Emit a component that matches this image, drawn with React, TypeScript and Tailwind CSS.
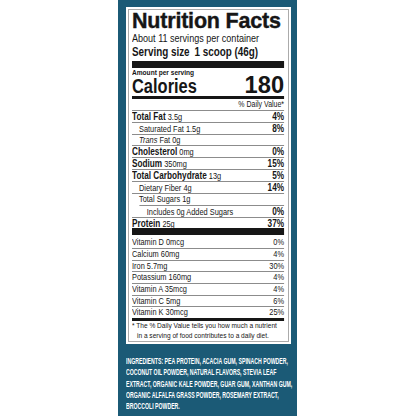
import React from "react";

type Nutrient = {
  label: string;
  amount?: string;
  pct?: string;
  bold?: boolean;
  indent?: number;
  italic?: string;
  lineIndent?: number;
  short?: boolean;
};

const nutrients: Nutrient[] = [
  { label: "Total Fat", amount: "3.5g", pct: "4%", bold: true },
  { label: "Saturated Fat", amount: "1.5g", pct: "8%", indent: 1 },
  { italic: "Trans", label: "Fat", amount: "0g", indent: 1, short: true },
  { label: "Cholesterol", amount: "0mg", pct: "0%", bold: true },
  { label: "Sodium", amount: "350mg", pct: "15%", bold: true },
  { label: "Total Carbohydrate", amount: "13g", pct: "5%", bold: true },
  { label: "Dietary Fiber", amount: "4g", pct: "14%", indent: 1 },
  { label: "Total Sugars", amount: "1g", indent: 1, lineIndent: 1 },
  { label: "Includes 0g Added Sugars", pct: "0%", indent: 2 },
  { label: "Protein", amount: "25g", pct: "37%", bold: true, short: true },
];

const vitamins: [string, string, boolean][] = [
  ["Vitamin D 0mcg", "0%", false],
  ["Calcium 60mg", "4%", false],
  ["Iron 5.7mg", "30%", true],
  ["Potassium 160mg", "4%", false],
  ["Vitamin A 35mcg", "4%", false],
  ["Vitamin C 5mg", "6%", true],
  ["Vitamin K 30mcg", "25%", false],
];

const ingredients = [
  "INGREDIENTS: PEA PROTEIN, ACACIA GUM, SPINACH POWDER,",
  "COCONUT OIL POWDER, NATURAL FLAVORS, STEVIA LEAF",
  "EXTRACT, ORGANIC KALE POWDER, GUAR GUM, XANTHAN GUM,",
  "ORGANIC ALFALFA GRASS POWDER, ROSEMARY EXTRACT,",
  "BROCCOLI POWDER.",
];

// the label is set in a narrow face; no narrow font is installed, so the
// block is laid out wide and squeezed horizontally
const indentCls = ["pl-0", "pl-[8.5px]", "pl-[18px]"];
const lineCls = ["ml-0", "ml-[8.5px]"];

function Line({ indent = 0 }: { indent?: number }) {
  return <div className={`h-px bg-[#8c8c8c] ${lineCls[indent]}`} />;
}

function NutrientRow({ n, last }: { n: Nutrient; last: boolean }) {
  return (
    <>
      <div
        className={`flex items-baseline justify-between ${n.short ? "h-[10px]" : "h-[11px]"} leading-[11px] ${indentCls[n.indent ?? 0]}`}
      >
        <span className="text-[9px]">
          {n.italic && <i>{n.italic} </i>}
          {n.bold ? <span className="text-[10px] font-bold">{n.label}</span> : n.label}
          {n.amount && <span> {n.amount}</span>}
        </span>
        {n.pct && <span className="text-[10px] font-bold">{n.pct}</span>}
      </div>
      {!last && <Line indent={n.lineIndent} />}
    </>
  );
}

export default function App() {
  return (
    <div className="flex min-h-[416px] bg-white pl-[118px] font-['Liberation_Sans',Arial,sans-serif]">
      <div className="min-h-[416px] w-[179px] shrink-0 overflow-hidden bg-[#1b5a76] pt-[7px] pl-[8px] pr-[6px]">
        <div className="bg-white p-[2px] text-[#161616]">
          <div className="overflow-hidden border border-[#ababab] pl-[3px] pr-[4px]">
            <div className="whitespace-nowrap text-[21.5px] leading-[22px] font-bold tracking-[-0.2px] [-webkit-text-stroke:0.4px_#161616]">
              Nutrition Facts
            </div>
            <div className="w-[185px] origin-top-left scale-x-[0.822]">
              <div className="text-[11px] leading-[13px]">About 11 servings per container</div>
              <div className="flex gap-[6px] text-[12px] leading-[14px] font-bold">
                <span>Serving size</span>
                <span>1 scoop (46g)</span>
              </div>
              <div className="mt-[2px] h-[7px] bg-[#161616]" />
              <div className="text-[8px] leading-[9px] font-bold">Amount per serving</div>
              <div className="flex h-[19px] items-baseline justify-between">
                <span className="text-[20px] leading-[15px] font-bold">Calories</span>
                <span className="inline-block origin-right scale-x-[1.2] text-[24px] leading-[15px] font-bold">
                  180
                </span>
              </div>
              <div className="h-[3px] bg-[#161616]" />
              <div className="h-[11px] text-right text-[8.5px] leading-[11px]">% Daily Value*</div>
              <Line />
              {nutrients.map((n, i) => (
                <NutrientRow key={n.label + i} n={n} last={i === nutrients.length - 1} />
              ))}
              <div className="h-[7px] bg-[#161616]" />
              <div className="pt-[2px]">
                {vitamins.map(([label, pct, short], i) => (
                  <React.Fragment key={label}>
                    <div
                      className={`flex items-baseline justify-between ${short ? "h-[10px]" : "h-[11px]"} text-[9px] leading-[11px]`}
                    >
                      <span>{label}</span>
                      <span>{pct}</span>
                    </div>
                    {i < vitamins.length - 1 && <Line />}
                  </React.Fragment>
                ))}
              </div>
              <div className="h-[3px] bg-[#161616]" />
              <div className="text-[8px] leading-[10px] whitespace-nowrap">
                <div>* The % Daily Value tells you how much a nutrient</div>
                <div className="pl-[6px]">in a serving of food contributes to a daily diet.</div>
              </div>
            </div>
          </div>
        </div>
        <div className="mt-[11px] text-[9.5px] leading-[11.3px] font-bold text-white">
          <div className="w-max origin-top-left scale-x-[0.545] whitespace-nowrap">
            {ingredients.map((l) => (
              <div key={l}>{l}</div>
            ))}
          </div>
        </div>
      </div>
    </div>
  );
}
